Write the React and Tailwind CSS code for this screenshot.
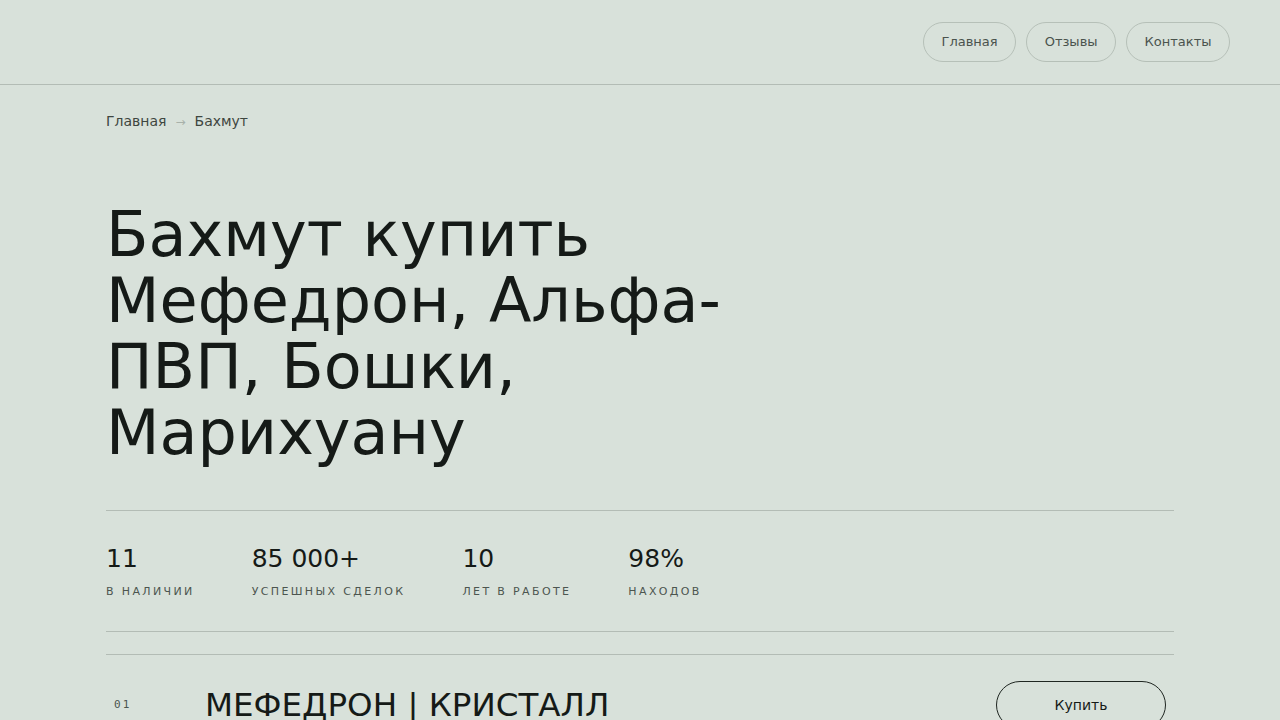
import React from "react";

export default function App() {
  const stats = [
    ["11", "в наличии"],
    ["85 000+", "успешных сделок"],
    ["10", "лет в работе"],
    ["98%", "находов"],
  ];
  return (
    <div className="min-h-[720px] bg-[#d8e1da] text-[#151a17]" style={{ fontFamily: '"DejaVu Sans", sans-serif' }}>
      <header className="h-[85px] border-b border-[#b3bcb5] flex items-center justify-end px-[50px]">
        <nav className="flex gap-[10px] -mt-[1px]">
          {["Главная", "Отзывы", "Контакты"].map((t) => (
            <a key={t} className="h-[40px] px-[17.5px] rounded-full border border-[#b6c0b8] flex items-center text-[13px] text-[#4a534d]">
              {t}
            </a>
          ))}
        </nav>
      </header>
      <main className="w-[1068px] mx-auto">
        <div className="flex items-center gap-[9px] text-[14px] text-[#3e4640] pt-[26px]">
          <span>Главная</span>
          <span className="text-[#a8b1aa] text-[12px]">→</span>
          <span>Бахмут</span>
        </div>
        <h1 className="mt-[70px] text-[62px] leading-[66px] font-normal w-[640px]">
          Бахмут купить Мефедрон, Альфа-ПВП, Бошки, Марихуану
        </h1>
        <div className="mt-[44px] border-t border-[#b3bcb5] pt-[32px] pb-[32px] border-b flex gap-[57px]">
          {stats.map(([n, l]) => (
            <div key={l} className="flex flex-col">
              <div className="text-[25px] leading-[32px]">{n}</div>
              <div className="mt-[10px] text-[11px] leading-[14px] uppercase tracking-[0.215em] text-[#4c554f]">{l}</div>
            </div>
          ))}
        </div>
        <div className="mt-[22px] border-t border-[#b3bcb5] flex items-center pt-[26px]">
          <div className="w-[99px] pl-[8px] text-[11px] text-[#4c554f] tracking-[0.2em]" style={{ fontFamily: '"DejaVu Sans Mono", monospace' }}>01</div>
          <div className="flex-1 text-[32.5px] leading-[40px] uppercase">МЕФЕДРОН | КРИСТАЛЛ</div>
          <button className="mr-[8px] w-[170px] h-[48px] rounded-full border border-[#1f2621] text-[14px]">Купить</button>
        </div>
      </main>
    </div>
  );
}
